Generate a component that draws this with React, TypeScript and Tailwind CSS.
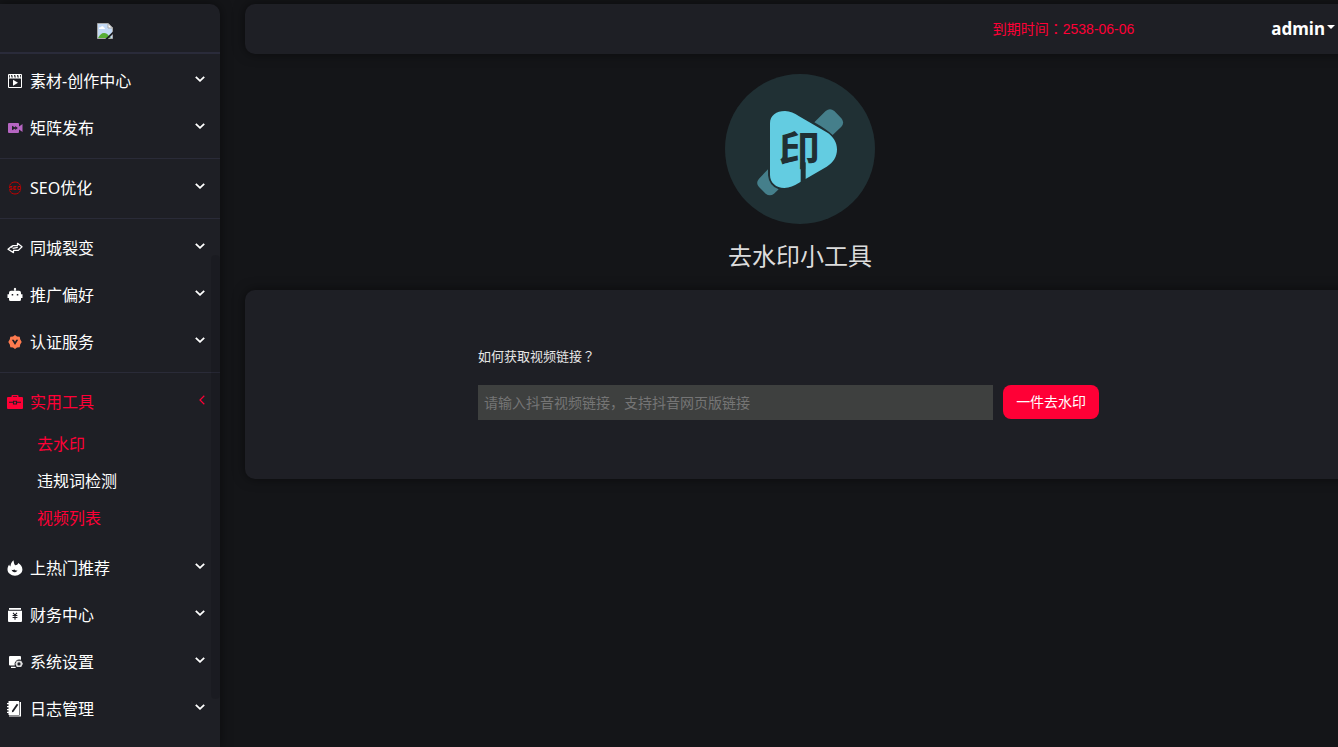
import { useState, type ReactNode } from 'react'

type MenuItem = {
  id: string
  label: string
  icon: ReactNode
  children?: string[]
}

function Icon({ className = 'text-white', children }: { className?: string; children: ReactNode }) {
  return (
    <svg viewBox="0 0 16 16" fill="currentColor" aria-hidden="true" className={`size-4 shrink-0 ${className}`}>
      {children}
    </svg>
  )
}

const menuGroups: MenuItem[][] = [
  [
    {
      id: 'material',
      label: '素材-创作中心',
      icon: (
        <Icon>
          <path d="M2 1h12a1 1 0 0 1 1 1v12a1 1 0 0 1-1 1H2a1 1 0 0 1-1-1V2a1 1 0 0 1 1-1zm0 4.6V14h12V5.6zM2 2v2.4h1L2.6 2zm2 0 .6 2.4h1.2L5.2 2zm3 0 .6 2.4h1.2L8.2 2zm3 0 .6 2.4h1.2L11.2 2zm3 0 .5 2.4h.5V2z" fillRule="evenodd" />
          <path d="M6 6.8v6l5-3z" />
        </Icon>
      ),
    },
    {
      id: 'matrix',
      label: '矩阵发布',
      icon: (
        <Icon className="text-[#b565c1]">
          <path d="M2 3h9a1 1 0 0 1 1 1v2.400L15.500 4v8L12 9.600V12a1 1 0 0 1-1 1H2a1 1 0 0 1-1-1V4a1 1 0 0 1 1-1zm3 2.800v4.400l3.200-1.700V10l2.600-2-2.600-2v1.500z" fillRule="evenodd" />
        </Icon>
      ),
    },
  ],
  [
    {
      id: 'seo',
      label: 'SEO优化',
      icon: (
        <Icon className="text-[#c80000]">
          <path d="M2.6 5.6C3.4 3.4 5.5 2 8 2s4.600 1.400 5.400 3.600M2.600 10.400C3.400 12.600 5.500 14 8 14s4.600-1.400 5.400-3.600" fill="none" stroke="currentColor" />
          <path d="M5.200 6.500H2.500V8h2.500v1.500H2.300M9.300 6.500H6.800v3h2.500M6.800 8h2.200M11 6.500h2.600v3H11z" fill="none" stroke="currentColor" strokeWidth=".9" />
        </Icon>
      ),
    },
  ],
  [
    {
      id: 'city',
      label: '同城裂变',
      icon: (
        <Icon>
          <path d="M4.500 7.300 5.800 5.600h4.700V3.300L15 6.800l-3.700 3.600H6.500v2.200L1 9.300l4-3.300M5.600 8.300l5.200-.9" fill="none" stroke="currentColor" strokeWidth="1.300" strokeLinejoin="round" />
        </Icon>
      ),
    },
    {
      id: 'promo',
      label: '推广偏好',
      icon: (
        <Icon>
          <path d="M7.300 3.800V3a1.200 1.200 0 1 1 1.400 0v.8H12a2 2 0 0 1 2 2v1.400h1.500V11H14v1.500a1.500 1.500 0 0 1-1.500 1.500h-9A1.500 1.500 0 0 1 2 12.500V11H.5V7.200H2V5.800a2 2 0 0 1 2-2zM4.700 7v1.500h1.500V7zm5.100 0v1.500h1.500V7z" fillRule="evenodd" />
        </Icon>
      ),
    },
    {
      id: 'verify',
      label: '认证服务',
      icon: (
        <Icon className="text-[#ff7b4f]">
          <path d="m8 1 2 1.500 2.700.2.500 2.600L14.700 8l-1.500 2.600-.5 2.700-2.700.2L8 15l-2-1.500-2.700-.2-.5-2.700L1.300 8l1.500-2.700.5-2.600L6 2.500z" />
          <path d="M4.800 5.800h2L8 7.800l1.200-2h2L8 11z" fill="#1e1f25" />
        </Icon>
      ),
    },
  ],
  [
    {
      id: 'tools',
      label: '实用工具',
      children: ['去水印', '违规词检测', '视频列表'],
      icon: (
        <Icon className="text-[#ff0036]">
          <path d="M4.500 3V2a1 1 0 0 1 1-1h5a1 1 0 0 1 1 1v1H15a1 1 0 0 1 1 1v10a1 1 0 0 1-1 1H1a1 1 0 0 1-1-1V4a1 1 0 0 1 1-1zM6 3h4v-.8H6z" fillRule="evenodd" />
          <path d="M2 8.200h4M10 8.200h4M6.500 7.200h3v2.800h-3z" fill="none" stroke="#1e1f25" strokeWidth="1.100" />
        </Icon>
      ),
    },
    {
      id: 'hot',
      label: '上热门推荐',
      icon: (
        <Icon>
          <path d="M6.500.3c.4 2 .4 3.700 1.700 5 1.600-.2 2.600-.7 3-2.300 2.500 1.600 4.200 3.800 4.200 6.600 0 3.500-3.300 6.100-7.400 6.100S.5 13.100.5 9.600C.5 7.800 1 6.200 2.200 4.600c.2 1 .5 1.600 1.200 1.900C3.600 4.300 4.700 1.800 6.500.3zM4.600 9.800c.4 1.700 1.900 2.600 3.400 2.400 1.300-.1 2.200-.9 2.300-2-1.200.6-2.200.3-2.600-.6-.8.5-2 .6-3.100.2z" fillRule="evenodd" />
        </Icon>
      ),
    },
    {
      id: 'finance',
      label: '财务中心',
      icon: (
        <Icon>
          <path d="M2 1h12v1.800H2zM1 3.800h14V14a1 1 0 0 1-1 1H2a1 1 0 0 1-1-1z" />
          <path d="m6 5.800 2 2.200 2-2.200M5.600 8.500h4.800M5.600 10.500h4.800M8 8v4.800" fill="none" stroke="#1e1f25" strokeWidth="1.100" />
        </Icon>
      ),
    },
    {
      id: 'system',
      label: '系统设置',
      icon: (
        <Icon>
          <path d="M3 2h10a1 1 0 0 1 1 1v2.800a4.800 4.800 0 0 0-6.300 5.700H3a1 1 0 0 1-1-1V3a1 1 0 0 1 1-1zM4 12.700h4.200l.8 1.300H4z" />
          <path d="M9.800 6.700h4.400l1.700 3-1.700 3.300H9.800L8.300 9.700zm2.200 1.600a1.600 1.600 0 1 0 0 3.200 1.600 1.600 0 0 0 0-3.200z" fillRule="evenodd" opacity=".85" />
        </Icon>
      ),
    },
    {
      id: 'logs',
      label: '日志管理',
      icon: (
        <Icon>
          <path d="M1.500 0H12v14H1.500v-2H0v-1.200h1.500V9.200H0V8h1.500V6.200H0V5h1.500V3.200H0V2h1.500zM12.600 1H14v14.500H2V14.600h10.600z" />
          <path d="m9.800 2.700-4.500 6.500-.5 2.300 2-1.300 4.500-6.500z" fill="#1e1f25" />
        </Icon>
      ),
    },
  ],
]

function ChevronDown() {
  return (
    <svg viewBox="0 0 10 6" className="-mt-1 ml-auto h-1.5 w-2.5 shrink-0" aria-hidden="true">
      <path d="m.8.800 4.200 4 4.200-4" fill="none" stroke="#fff" strokeWidth="1.800" />
    </svg>
  )
}

function ChevronLeft() {
  return (
    <svg viewBox="0 0 6 10" className="-mt-1 ml-auto h-2.5 w-1.5 shrink-0" aria-hidden="true">
      <path d="M5.300.800 1 5l4.300 4.200" fill="none" stroke="#ff0036" strokeWidth="1.200" />
    </svg>
  )
}

function MissingImage() {
  return (
    <svg viewBox="0 0 16 16" className="size-4" role="img" aria-label="logo">
      <path d="M.5.500h10.500l4.500 4.500v10.500H.5z" fill="#c3d9f5" stroke="#a8a8a8" />
      <path d="M2 5.500c0-1 1-1.500 1.800-1.200C4.300 2.800 6.500 3 6.800 4.500c1 0 1.400 1 .9 1.500H2z" fill="#fff" />
      <path d="M1 15c1.500-3 3.500-5 6-5s3.500 1 4.500 2.500L14 15z" fill="#57ad35" />
      <path d="M11 .5V5h4.500z" fill="#fff" stroke="#a8a8a8" />
      <path d="M16 8.500 8.500 15.700V16h2.300L16 11z" fill="#1e1f25" />
    </svg>
  )
}

function ToolLogo() {
  return (
    <svg viewBox="0 0 450 450" className="size-[150px]" role="img" aria-label="去水印">
      <circle cx="225" cy="225" r="225" fill="#203034" />
      <path d="M268 145 302 111q13-10 26 0l21 22q11 13 0 25l-26 25q-20-18-55-38zM129 286l-27 28q-11 13 0 25l20 20q13 10 25 0l14-13q-29-10-32-42z" fill="#457f8b" />
      <path d="M135 148c0-24 19-37 45-37 16 0 28 7 41 15l84 49c20 12 31 31 31 51 0 22-11 40-31 52l-84 49c-14 8-27 15-43 15-25 0-43-16-43-39z" fill="#63cce1" />
      <path d="M227 265h15v60h-15z" fill="#203034" />
      <text x="223" y="272" textAnchor="middle" fontSize="124" fontWeight="700" fill="#203034" className="font-['Noto_Sans_CJK_SC',sans-serif]">
        印
      </text>
    </svg>
  )
}

function Sidebar() {
  const [openId, setOpenId] = useState('tools')

  return (
    <aside className="relative mt-1 w-[220px] shrink-0 rounded-tr-[10px] bg-[#1e1f25] shadow-[0_0_12px_rgba(0,0,0,0.5)]">
      <div className="flex h-[50px] items-center justify-center border-b-2 border-[#2a2b3a] pt-1.5 pr-2.5">
        <MissingImage />
      </div>
      <nav className="pt-[3px] text-base text-white">
        {menuGroups.map((group, index) => (
          <div key={group[0].id} className={index > 0 ? 'mt-[7px] border-t border-[#2a2b38] pt-[5px]' : ''}>
            {group.map((item) => {
              const open = item.id === openId && item.children
              return (
                <div key={item.id}>
                  <button
                    type="button"
                    onClick={() => setOpenId(open ? '' : item.id)}
                    className={`flex h-[47px] w-full items-center gap-[7px] pr-[15px] pl-[7px] text-left ${open ? 'text-[#ff0036]' : ''}`}
                  >
                    {item.icon}
                    <span>{item.label}</span>
                    {open ? <ChevronLeft /> : <ChevronDown />}
                  </button>
                  {open ? (
                    <ul className="pb-2 pl-[37px]">
                      {item.children?.map((child) => (
                        <li key={child} className="flex h-[37px] items-center">
                          <a href="#" className={child === '违规词检测' ? 'text-white' : 'text-[#ff0036]'}>
                            {child}
                          </a>
                        </li>
                      ))}
                    </ul>
                  ) : null}
                </div>
              )
            })}
          </div>
        ))}
      </nav>
      <div className="absolute top-[251px] right-0 h-[444px] w-[9px] rounded-sm bg-black/10" />
    </aside>
  )
}

export default function App() {
  return (
    <div className="flex min-h-screen overflow-hidden bg-[#141518] font-['Noto_Sans','Noto_Sans_CJK_SC',sans-serif]">
      <Sidebar />
      <main className="-mr-[17px] ml-[25px] min-w-0 flex-1 pt-1">
        <header className="flex h-[50px] items-center justify-end gap-[137px] rounded-[10px] bg-[#1e1f25] pr-5 shadow-[0_0_12px_rgba(0,0,0,0.5)]">
          <p className="font-['Liberation_Sans','Noto_Sans_CJK_JP',sans-serif] text-sm text-[#ff0036]">到期时间：2538-06-06</p>
          <button type="button" className="flex items-center gap-0.5 text-[17px] font-bold text-white">
            admin
            <svg viewBox="0 0 8 4" className="-mt-1 h-1 w-2" aria-hidden="true">
              <path d="M0 0h8L4 4z" fill="#fff" />
            </svg>
          </button>
        </header>

        <div className="flex flex-col items-center pt-5">
          <ToolLogo />
          <h1 className="mt-4 text-2xl text-[#dcdcdc]">去水印小工具</h1>
        </div>

        <section className="mt-[18px] rounded-[10px] bg-[#1e1f25] pt-14 pb-[59px] shadow-[0_0_12px_rgba(0,0,0,0.5)]">
          <form className="mx-auto w-[58%]" onSubmit={(event) => event.preventDefault()}>
            <label htmlFor="video-link" className="block font-['Noto_Sans_CJK_JP',sans-serif] text-[13px] leading-5 text-[#e6e6e6]">
              如何获取视频链接？
            </label>
            <div className="mt-[19px] flex items-start gap-2.5">
              <input
                id="video-link"
                type="text"
                placeholder="请输入抖音视频链接，支持抖音网页版链接"
                className="h-[35px] w-[80%] bg-[#3e403f] px-1.5 text-sm text-white outline-none placeholder:text-[#757575]"
              />
              <button type="submit" className="h-[34px] w-24 shrink-0 rounded-lg bg-[#ff0036] text-sm text-white">
                一件去水印
              </button>
            </div>
          </form>
        </section>
      </main>
    </div>
  )
}
